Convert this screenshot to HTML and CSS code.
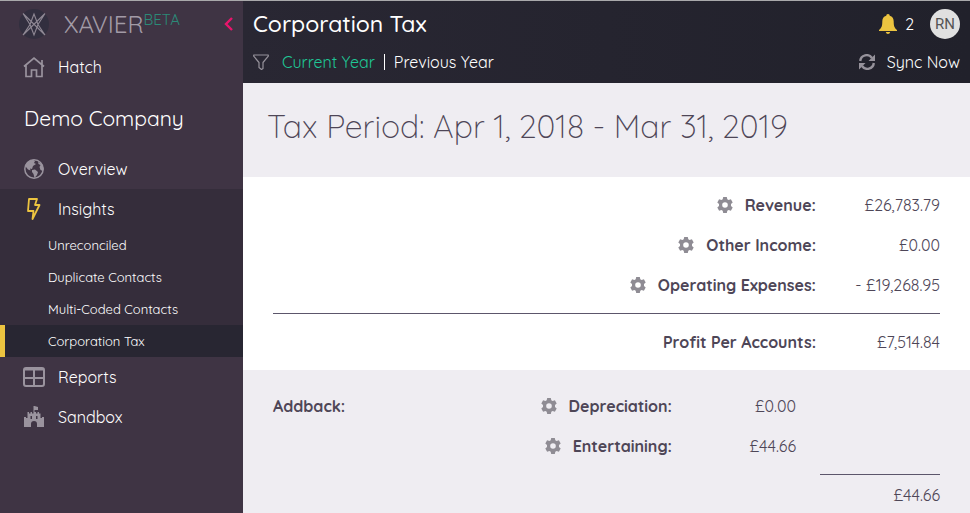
FILE: index.html
```html
<!DOCTYPE html>
<html lang="en">
<head>
<meta charset="utf-8">
<title>Corporation Tax - Xavier</title>
<link rel="stylesheet" href="styles.css">
</head>
<body>
<svg class="sprite" aria-hidden="true">
  <symbol id="gear" viewBox="0 0 16 16">
    <path fill-rule="evenodd" d="M6.200 0h3.600l.5 2.300 1.300.8 2.300-.8 1.800 3.100-1.700 1.600v2l1.700 1.600-1.800 3.100-2.300-.8-1.300.8-.5 2.300H6.200l-.5-2.300-1.300-.8-2.300.8L.3 10.600 2 9V7L.3 5.400l1.800-3.100 2.300.8 1.300-.8zM8 5.200a2.800 2.800 0 1 0 0 5.600 2.800 2.800 0 0 0 0-5.600z"/>
  </symbol>
</svg>
<div class="app">
  <nav class="sidebar">
    <div class="brand">
      <svg class="logo" viewBox="0 0 30 30" aria-hidden="true">
        <circle cx="15" cy="15" r="15" fill="#322f3f"/>
        <path d="M4 4.500L26 26M26 4.500L4 26M4 4.500l7 11L4 26M26 4.500l-7 11L26 26M15 5l-4 10.500L15 26l4-10.500z" fill="none" stroke="#8f8894" stroke-width="1.100"/>
      </svg>
      <a class="brand-name" href="#">XAVIER<sup>BETA</sup></a>
      <button class="collapse" type="button" aria-label="Collapse menu">
        <svg viewBox="0 0 9 14" aria-hidden="true"><path d="M8 1L2 7l6 6" fill="none" stroke="#e8156c" stroke-width="2.400"/></svg>
      </button>
    </div>
    <a class="item" href="#">
      <svg class="icon" viewBox="0 0 22 22" aria-hidden="true"><path d="M1 10.500L11 2l10 8.500M3 9v11.500h5.500V14h5v6.500H19V9M19 9V4" fill="none" stroke="currentColor" stroke-width="1.700"/></svg>
      <span>Hatch</span>
    </a>
    <h2 class="company">Demo Company</h2>
    <a class="item" href="#">
      <svg class="icon" viewBox="0 0 22 22" aria-hidden="true"><circle cx="11" cy="11" r="9.200" fill="none" stroke="currentColor" stroke-width="1.500"/><path d="M2 9c1-4 4-7 8-7.300l2 1.300-1 2 2 1-3 2-1 3-2-.5.500 2-2.500-1L3 9zM9 12l3-.500 3 2.500-1 3-2.500 3-1-4-1.500-2zM15 4l4 2 1.500 4-.5 3-2.500-1-1-3 1-2-2-1z" fill="currentColor"/></svg>
      <span>Overview</span>
    </a>
    <div class="group">
      <a class="item" href="#">
        <svg class="icon bolt" viewBox="0 0 22 22" aria-hidden="true"><path d="M6 1h8l-2 6h4.500L9.500 21l1-8H5z" fill="none" stroke="currentColor" stroke-width="1.800" stroke-linejoin="round"/></svg>
        <span>Insights</span>
      </a>
      <a class="sub" href="#">Unreconciled</a>
      <a class="sub" href="#">Duplicate Contacts</a>
      <a class="sub" href="#">Multi-Coded Contacts</a>
      <a class="sub active" href="#" aria-current="page">Corporation Tax</a>
    </div>
    <a class="item" href="#">
      <svg class="icon" viewBox="0 0 22 22" aria-hidden="true"><rect x="1" y="2" width="20" height="18" rx="2" fill="none" stroke="currentColor" stroke-width="2"/><path d="M11 3v16M2 12h18" stroke="currentColor" stroke-width="2"/><path d="M2 3.500h18" stroke="currentColor" stroke-width="2"/></svg>
      <span>Reports</span>
    </a>
    <a class="item" href="#">
      <svg class="icon" viewBox="0 0 22 22" aria-hidden="true"><path fill-rule="evenodd" fill="currentColor" d="M10.500 0h1l3.500 1v3h-3.500v2H13v1.500h1.500V6H16v1.500h1.500V12H19v-1h2v10h-7v-3a3 3 0 0 0-6 0v3H1V11h2v1h1.500V6H6v1.500h1.500V6H9v1.500h1.500zM7.500 10v3H9v-3zM13 10v3h1.500v-3z"/></svg>
      <span>Sandbox</span>
    </a>
  </nav>

  <div class="page">
    <header class="topbar">
      <div class="bar-row">
        <h1>Corporation Tax</h1>
        <div class="account">
          <button class="alerts" type="button">
            <svg viewBox="0 0 18 20" aria-hidden="true"><path d="M9 0c1.200 0 1.700.8 1.700 1.700 2.800.7 4 3 4 5.800 0 4.500.8 6.500 3.300 8.500v1H0v-1c2.500-2 3.300-4 3.300-8.500 0-2.800 1.200-5.100 4-5.800C7.300.8 7.800 0 9 0zM6.800 18h4.400c-.3 1.300-1.100 2-2.200 2s-1.900-.7-2.200-2z" fill="#ecc440"/></svg>
            <span>2</span>
          </button>
          <button class="avatar" type="button">RN</button>
        </div>
      </div>
      <div class="bar-row">
        <div class="filters">
          <svg class="funnel" viewBox="0 0 16 16" aria-hidden="true"><path d="M.7 1h14.600v1.200L10 8.500v6L8.500 15.500 6 13.500v-5L.7 2.200z" fill="none" stroke="currentColor" stroke-width="1.200" stroke-linejoin="round"/></svg>
          <a class="current" href="#">Current Year</a>
          <span class="divider"></span>
          <a href="#">Previous Year</a>
        </div>
        <button class="sync" type="button">
          <svg viewBox="0 0 16 16" aria-hidden="true"><path d="M1.200 7A6.500 6.500 0 0 1 13 4M14.800 9A6.500 6.500 0 0 1 3 12" fill="none" stroke="currentColor" stroke-width="2.400"/><path d="M16 .5V7H9.500zM0 15.500V9h6.500z" fill="currentColor"/></svg>
          <span>Sync Now</span>
        </button>
      </div>
    </header>
    <main>
      <h2 class="period">Tax Period: Apr 1, 2018 - Mar 31, 2019</h2>
      <section class="panel white">
        <table>
          <colgroup><col><col class="amount-col"></colgroup>
          <tbody>
            <tr><th scope="row"><svg class="gear"><use href="#gear"/></svg>Revenue:</th><td>£26,783.79</td></tr>
            <tr><th scope="row"><svg class="gear"><use href="#gear"/></svg>Other Income:</th><td>£0.00</td></tr>
            <tr class="last"><th scope="row"><svg class="gear"><use href="#gear"/></svg>Operating Expenses:</th><td>- £19,268.95</td></tr>
            <tr class="profit"><th scope="row">Profit Per Accounts:</th><td>£7,514.84</td></tr>
          </tbody>
        </table>
      </section>
      <section class="panel addback">
        <table>
          <colgroup><col><col><col class="amount-col"><col class="gap-col"><col class="total-col"></colgroup>
          <tbody>
            <tr><th class="start" scope="rowgroup">Addback:</th><th scope="row"><svg class="gear"><use href="#gear"/></svg>Depreciation:</th><td>£0.00</td><td></td><td></td></tr>
            <tr class="last"><td></td><th scope="row"><svg class="gear"><use href="#gear"/></svg>Entertaining:</th><td>£44.66</td><td></td><td></td></tr>
            <tr class="sum"><td colspan="4"></td><td class="total">£44.66</td></tr>
          </tbody>
        </table>
      </section>
    </main>
  </div>
</div>
</body>
</html>
```
FILE: styles.css
```css
* {
  box-sizing: border-box;
}

body {
  margin: 0;
  font-family: Quicksand, Lato, sans-serif;
  font-size: 16px;
  line-height: 24px;
  color: #4e4657;
  background: #efedf2;
}

a {
  color: inherit;
  text-decoration: none;
}

button {
  padding: 0;
  border: 0;
  background: none;
  color: inherit;
  font: inherit;
}

h1,
h2 {
  margin: 0;
  font-weight: 400;
}

svg {
  display: block;
  flex: none;
}

.sprite {
  display: none;
}

.app {
  display: flex;
  min-height: 100vh;
  border-top: 1px solid #a9a9ab;
}

/* Sidebar */
.sidebar {
  flex: 0 0 243px;
  background: #3f3444;
  color: #fff;
}

.brand {
  display: flex;
  align-items: center;
  height: 46px;
  padding: 0 10px 0 19px;
}

.logo {
  width: 30px;
  height: 30px;
}

.brand-name {
  margin-left: 15px;
  font-size: 24px;
  font-weight: 400;
  color: #a29ba6;
}

.brand-name sup {
  font-size: 15px;
  line-height: 0;
  vertical-align: 8px;
  color: #2b8a78;
}

.collapse {
  margin-left: auto;
}

.collapse svg {
  width: 9px;
  height: 14px;
}

.item {
  display: flex;
  align-items: center;
  height: 40px;
  padding-left: 23px;
}

.icon {
  width: 22px;
  height: 22px;
  margin-right: 13px;
  color: #9a939e;
}

.bolt {
  color: #ecc440;
}

.company {
  padding: 0 24px;
  font-size: 21px;
  line-height: 62px;
}

.group {
  background: #352d3b;
}

.sub {
  display: block;
  padding-left: 48px;
  font-size: 13px;
  line-height: 32px;
}

.active {
  padding-left: 43px;
  border-left: 5px solid #ecc440;
  background: #282632;
}

/* Header */
.page {
  flex: 1;
  min-width: 0;
}

.topbar {
  padding: 4px 10px 2px;
  background: linear-gradient(to right, #292733, #21212b);
  color: #fff;
}

.bar-row {
  display: flex;
  align-items: center;
  justify-content: space-between;
  height: 38px;
}

h1 {
  font-size: 23px;
  font-weight: 500;
}

.account,
.alerts,
.filters,
.sync {
  display: flex;
  align-items: center;
}

.account {
  gap: 16px;
}

.alerts {
  gap: 8px;
}

.alerts svg {
  width: 18px;
  height: 20px;
}

.avatar {
  width: 30px;
  height: 30px;
  border-radius: 50%;
  background: #e0e0e0;
  color: #555;
  font-family: Roboto, sans-serif;
  font-size: 15px;
  font-weight: 400;
}

.filters {
  gap: 9px;
}

.funnel {
  width: 16px;
  height: 16px;
  margin-right: 4px;
  color: #96929b;
}

.current {
  color: #1fc796;
}

.divider {
  width: 1px;
  height: 16px;
  background: #fff;
}

.sync {
  gap: 12px;
}

.sync svg {
  width: 16px;
  height: 16px;
  color: #96929b;
}

/* Content */
.period {
  padding: 18px 24px 26px;
  font-size: 32px;
  font-weight: 300;
  line-height: 50px;
}

.panel {
  padding: 8px 30px;
}

.white {
  background: #fff;
}

.addback {
  padding: 16px 30px 0;
}

table {
  width: 100%;
  border-collapse: collapse;
}

th,
td {
  padding: 8px 0;
  text-align: right;
  white-space: nowrap;
}

th {
  font-weight: 700;
}

td {
  font-weight: 400;
}

.start {
  text-align: left;
}

.amount-col {
  width: 124px;
}

.gap-col {
  width: 24px;
}

.total-col {
  width: 120px;
}

.last > * {
  padding-bottom: 16px;
}

.profit > * {
  padding-top: 16px;
  border-top: 1px solid #5c566b;
}

.total {
  border-top: 1px solid #5c566b;
}

.sum > * {
  padding-bottom: 0;
}

.gear {
  display: inline-block;
  width: 16px;
  height: 16px;
  margin-right: 12px;
  vertical-align: -2px;
  fill: #8f8c94;
}
```
